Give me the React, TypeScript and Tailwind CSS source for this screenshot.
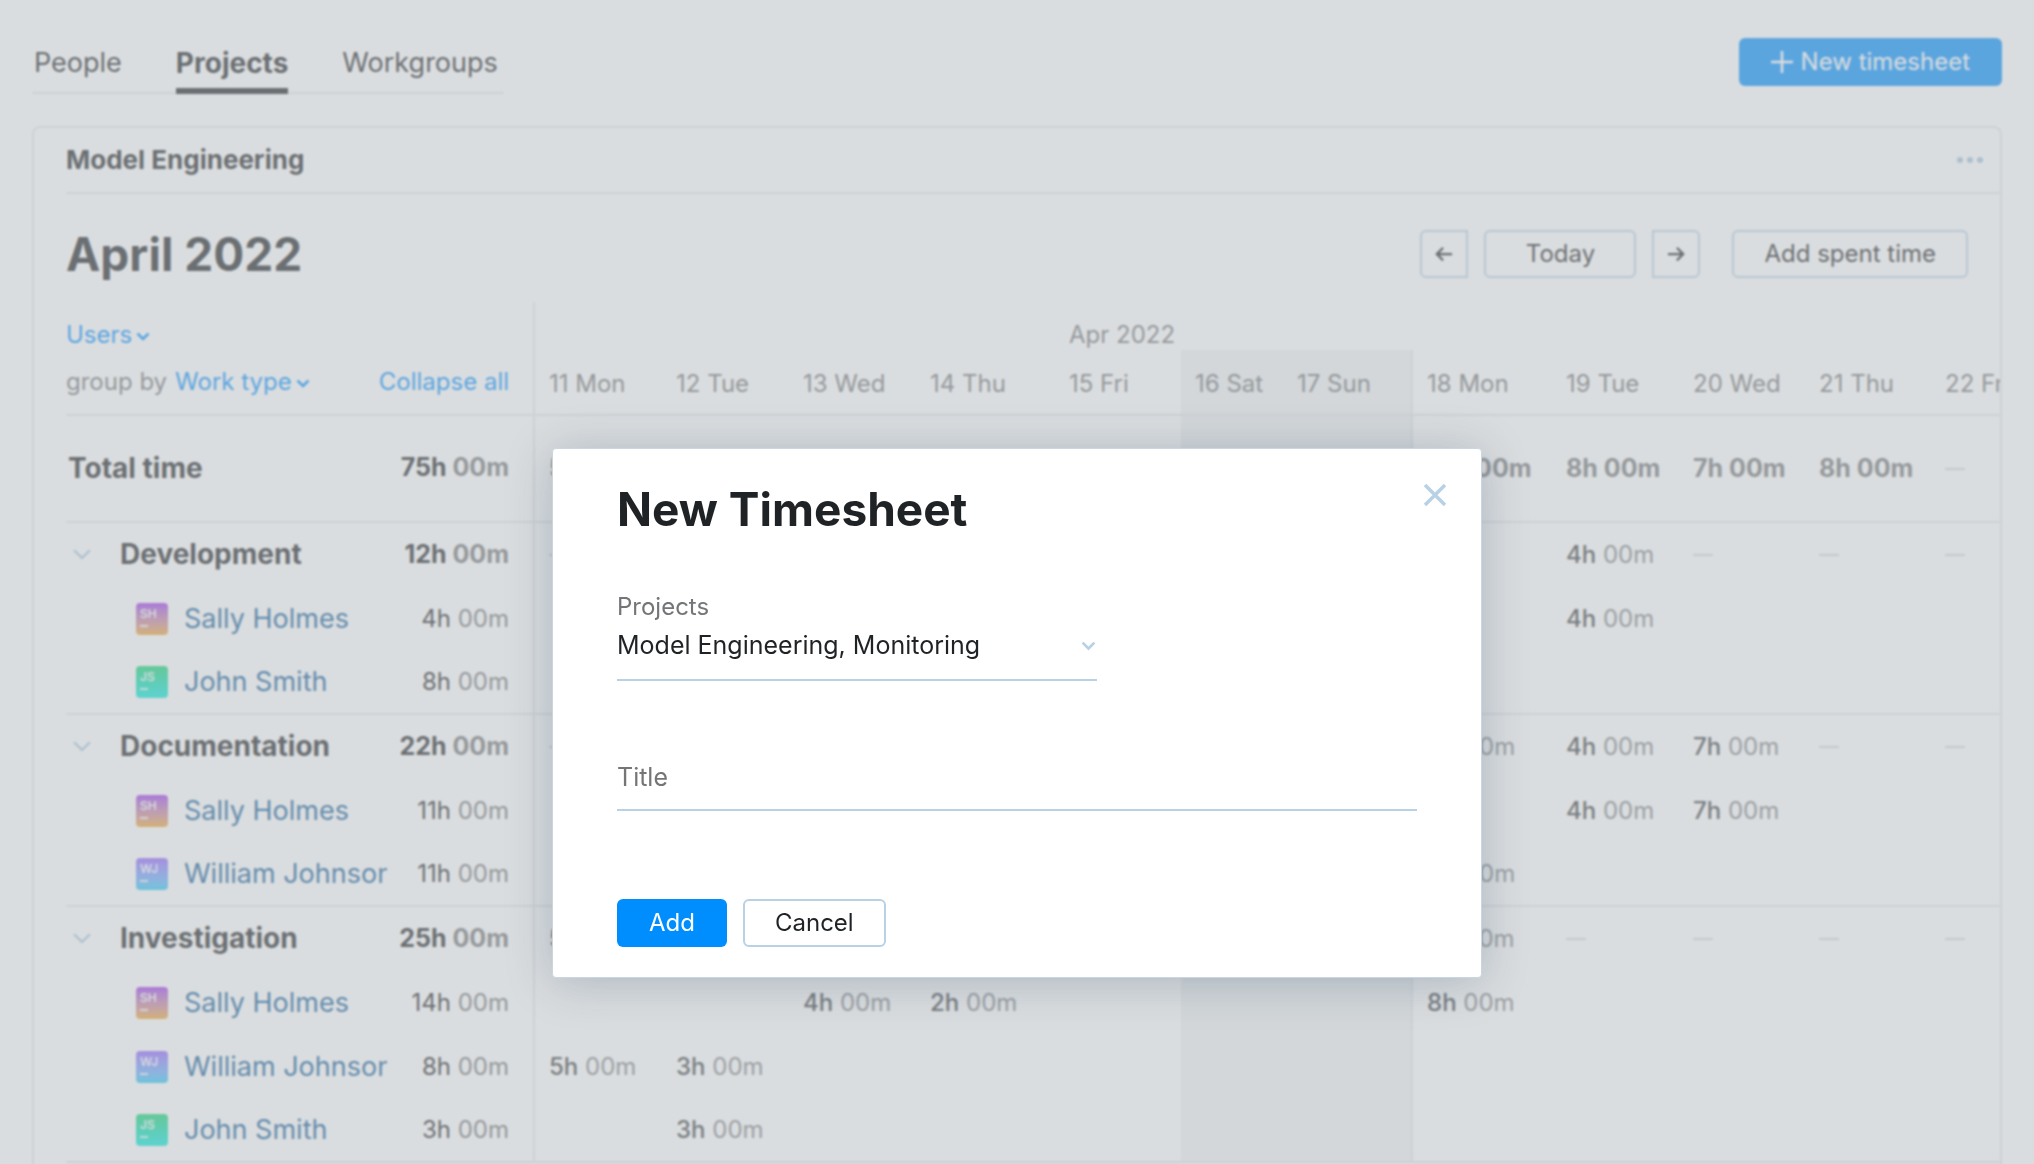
import { useState } from "react";
import type { ReactNode } from "react";

interface Day {
  label: string;
  month?: string;
  weekend?: boolean;
}

interface UserRow {
  name: string;
  initials: string;
  total: number;
  hours: Record<number, number>;
}

interface Group {
  name: string;
  total: number;
  hours: Record<number, number>;
  users: UserRow[];
}

const DAYS: Day[] = [
  { label: "11 Mon" },
  { label: "12 Tue" },
  { label: "13 Wed" },
  { label: "14 Thu" },
  { label: "15 Fri", month: "Apr 2022" },
  { label: "16 Sat", weekend: true },
  { label: "17 Sun", weekend: true },
  { label: "18 Mon" },
  { label: "19 Tue" },
  { label: "20 Wed" },
  { label: "21 Thu" },
  { label: "22 Fri" },
];

// Hours are keyed by the index of the day
const TOTALS: Record<number, number> = { 0: 5, 1: 6, 2: 12, 3: 9, 7: 12, 8: 8, 9: 7, 10: 8 };

const GROUPS: Group[] = [
  {
    name: "Development",
    total: 12,
    hours: { 2: 8, 8: 4 },
    users: [
      { name: "Sally Holmes", initials: "SH", total: 4, hours: { 8: 4 } },
      { name: "John Smith", initials: "JS", total: 8, hours: { 2: 8 } },
    ],
  },
  {
    name: "Documentation",
    total: 22,
    hours: { 3: 7, 7: 4, 8: 4, 9: 7 },
    users: [
      { name: "Sally Holmes", initials: "SH", total: 11, hours: { 8: 4, 9: 7 } },
      { name: "William Johnson", initials: "WJ", total: 11, hours: { 3: 7, 7: 4 } },
    ],
  },
  {
    name: "Investigation",
    total: 25,
    hours: { 0: 5, 1: 6, 2: 4, 3: 2, 7: 8 },
    users: [
      { name: "Sally Holmes", initials: "SH", total: 14, hours: { 2: 4, 3: 2, 7: 8 } },
      { name: "William Johnson", initials: "WJ", total: 8, hours: { 0: 5, 1: 3 } },
      { name: "John Smith", initials: "JS", total: 3, hours: { 1: 3 } },
    ],
  },
];

const AVATARS: Record<string, string> = {
  SH: "from-[#a030f0] to-[#f0a510]",
  JS: "from-[#18d370] to-[#08e8e0]",
  WJ: "from-[#9460ff] to-[#10caf8]",
};

function Chevron({ className }: { className: string }) {
  return (
    <svg viewBox="0 0 14 9" className={className} fill="none" stroke="currentColor" aria-hidden="true">
      <path d="M1.5 1.5 7 7l5.5-5.5" />
    </svg>
  );
}

function Avatar({ initials }: { initials: string }) {
  return (
    <span
      className={`flex size-8 shrink-0 flex-col rounded bg-linear-to-b px-1 pt-1 text-[12px] leading-[14px] font-medium text-white ${AVATARS[initials]}`}
    >
      {initials}
      <span className="mt-1 h-0.5 w-2 bg-white/80" />
    </span>
  );
}

function dayClass(index: number) {
  const day = DAYS[index];
  const edge = day.weekend && !DAYS[index + 1]?.weekend ? "border-r-2 border-r-[#e4e7ea]" : "";
  return `${day.weekend ? "bg-[#f0f2f3]" : ""} ${edge}`;
}

interface DayCellsProps {
  hours: Record<number, number>;
  kind: "total" | "group" | "user";
  border: string;
}

function DayCells({ hours, kind, border }: DayCellsProps) {
  return DAYS.map((day, i) => {
    const value = hours[i];
    return (
      <td key={day.label} className={`overflow-hidden pl-[14px] ${border} ${dayClass(i)}`}>
        {value ? (
          kind === "total" ? (
            <span className="text-[25px] font-bold text-[#737577]">{value}h 00m</span>
          ) : (
            <>
              <span className="font-medium text-[#3c4043]">{value}h</span>{" "}
              <span className="text-[#808386]">00m</span>
            </>
          )
        ) : (
          kind !== "user" && <span className="block h-0.5 w-5 bg-[#d0d5d9]" />
        )}
      </td>
    );
  });
}

function Total({ hours, bold }: { hours: number; bold?: boolean }) {
  return (
    <span className={bold ? "text-[25px] font-bold" : ""}>
      {hours}h <span className="text-[#737577]">00m</span>
    </span>
  );
}

function GroupRows({ group }: { group: Group }) {
  return (
    <>
      <tr className="h-16">
        <th scope="row" className="overflow-hidden pb-0.5 text-left">
          <button type="button" className="flex items-center">
            <Chevron className="ml-[6px] mr-7 w-5 stroke-[1.5] text-[#a3c4dd]" />
            <span className="text-[28px] leading-8 font-bold">{group.name}</span>
          </button>
        </th>
        <td className="border-r-2 border-r-[#e4e7ea] pr-6 pb-0.5 text-right">
          <Total hours={group.total} bold />
        </td>
        <DayCells hours={group.hours} kind="group" border="" />
      </tr>
      {group.users.map((user, i) => {
        const border = i === group.users.length - 1 ? "border-b-2 border-b-[#e4e7ea]" : "";
        return (
          <tr key={user.name} className="h-16">
            <th scope="row" className={`overflow-hidden pl-[70px] text-left font-normal ${border}`}>
              <a href="#" className="flex items-center gap-4 text-[27px] leading-8 text-[#0f5b99]">
                <Avatar initials={user.initials} />
                {user.name}
              </a>
            </th>
            <td className={`border-r-2 border-r-[#e4e7ea] pr-6 text-right ${border}`}>
              <Total hours={user.total} />
            </td>
            <DayCells hours={user.hours} kind="user" border={border} />
          </tr>
        );
      })}
    </>
  );
}

function TimesheetTable() {
  return (
    <table className="w-full table-fixed border-separate border-spacing-0 text-[24px] leading-8 whitespace-nowrap">
      <colgroup>
        <col className="w-[321px]" />
        <col className="w-[148px]" />
        <col className="w-[127px]" />
        <col className="w-[127px]" />
        <col className="w-[127px]" />
        <col className="w-[139px]" />
        <col className="w-[126px]" />
        <col className="w-[102px]" />
        <col className="w-[130px]" />
        <col className="w-[139px]" />
        <col className="w-[127px]" />
        <col className="w-[126px]" />
        <col className="w-[126px]" />
        <col />
      </colgroup>
      <thead className="text-left text-[#737577]">
        <tr className="h-12 leading-7">
          <td colSpan={2} className="border-r-2 border-r-[#e4e7ea] pt-[18px]">
            <button type="button" className="flex items-center gap-1 text-[#008eff]">
              Users
              <Chevron className="mt-0.5 w-[14px] stroke-[2.5]" />
            </button>
          </td>
          {DAYS.map((day) => (
            <td key={day.label} className="pt-[18px] pl-[14px]">
              {day.month}
            </td>
          ))}
        </tr>
        <tr className="h-[66px]">
          <td colSpan={2} className="border-r-2 border-b-2 border-[#e4e7ea] pr-6">
            <div className="flex items-center gap-2">
              group by
              <button type="button" className="flex items-center gap-1 text-[#008eff]">
                Work type
                <Chevron className="mt-0.5 w-[14px] stroke-[2.5]" />
              </button>
              <button type="button" className="ml-auto text-[#008eff]">
                Collapse all
              </button>
            </div>
          </td>
          {DAYS.map((day, i) => (
            <th
              key={day.label}
              scope="col"
              className={`overflow-hidden border-b-2 border-b-[#e4e7ea] pt-1 pl-[14px] font-normal ${dayClass(i)}`}
            >
              {day.label}
            </th>
          ))}
        </tr>
      </thead>
      <tbody className="text-[#1f2326]">
        <tr className="h-[107px]">
          <th scope="row" className="border-b-2 border-b-[#e4e7ea] pb-0.5 pl-0.5 text-left text-[28px] font-bold">
            Total time
          </th>
          <td className="border-r-2 border-b-2 border-[#e4e7ea] pr-6 pb-0.5 text-right">
            <Total hours={75} bold />
          </td>
          <DayCells hours={TOTALS} kind="total" border="border-b-2 border-b-[#e4e7ea]" />
        </tr>
        {GROUPS.map((group) => (
          <GroupRows key={group.name} group={group} />
        ))}
      </tbody>
    </table>
  );
}

function ToolButton({ label, className, children }: { label?: string; className: string; children: ReactNode }) {
  return (
    <button
      type="button"
      aria-label={label}
      className={`flex h-12 items-center justify-center border-2 border-[#b8d1e5] text-[24px] leading-8 ${className}`}
    >
      {children}
    </button>
  );
}

function Arrow({ className = "" }: { className?: string }) {
  return (
    <svg viewBox="0 0 20 18" className={`w-[18px] ${className}`} fill="none" stroke="currentColor" strokeWidth="2.5">
      <path d="M19 9H2M9 2 2 9l7 7" />
    </svg>
  );
}

function Dialog({ onClose }: { onClose: () => void }) {
  const [title, setTitle] = useState("");

  return (
    <div className="fixed inset-0 flex items-start justify-center bg-[#b6bbc0]/50 pt-[448px] backdrop-blur-[1px]">
      <form
        role="dialog"
        aria-labelledby="dialog-title"
        className="w-[930px] rounded border border-[#ccd6e0] bg-white px-16 py-[30px] text-[24px] leading-8 text-[#1f2326] shadow-[0_4px_48px_rgba(0,42,76,0.22)]"
      >
        <div className="flex items-start justify-between">
          <h2 id="dialog-title" className="text-[46px] leading-[60px] font-bold">
            New Timesheet
          </h2>
          <button type="button" aria-label="Close" className="-mr-[30px] mt-1 text-[#b8d1e5]" onClick={onClose}>
            <svg viewBox="0 0 24 24" className="size-6" fill="none" stroke="currentColor" strokeWidth="3.5">
              <path d="m2 2 20 20M22 2 2 22" />
            </svg>
          </button>
        </div>

        <div className="mt-[52px] w-[480px] border-b-2 border-[#b8d1e5]">
          <label htmlFor="projects" className="block text-[#737577]">
            Projects
          </label>
          <div className="relative flex items-center">
            <select id="projects" className="h-14 w-full appearance-none bg-transparent pb-3 text-[25px] outline-none">
              <option>Model Engineering, Monitoring</option>
            </select>
            <Chevron className="pointer-events-none absolute right-px bottom-7 w-[15px] stroke-[2.5] text-[#b8d1e5]" />
          </div>
        </div>

        <input
          type="text"
          aria-label="Title"
          placeholder="Title"
          value={title}
          onChange={(e) => setTitle(e.target.value)}
          className="mt-[68px] block h-[62px] w-full border-b-2 border-[#b8d1e5] pb-1 text-[25px] outline-none placeholder:text-[#737577]"
        />

        <div className="mt-[88px] flex gap-4">
          <button type="submit" className="h-12 rounded-md bg-[#008eff] px-8 text-white">
            Add
          </button>
          <button type="button" className="h-12 rounded-md border-2 border-[#b8d1e5] px-[30px]" onClick={onClose}>
            Cancel
          </button>
        </div>
      </form>
    </div>
  );
}

export default function App() {
  const [open, setOpen] = useState(true);

  return (
    <div className="flex h-screen flex-col overflow-hidden bg-white px-8 font-['Inter',sans-serif] text-[#1f2326]">
      <header className="flex items-start justify-between pt-[38px]">
        <nav className="flex h-14 gap-[54px] border-b-2 border-[#e4e7ea] pr-[6px] pl-[2px] text-[27px] leading-[50px]">
          <a href="#">People</a>
          <a href="#" className="h-14 border-b-[6px] border-[#1f2326] text-[28px] leading-[50px] font-bold">
            Projects
          </a>
          <a href="#">Workgroups</a>
        </nav>
        <button
          type="button"
          className="flex h-12 items-center gap-2 rounded-md bg-[#008eff] px-8 text-[24px] leading-8 text-white"
          onClick={() => setOpen(true)}
        >
          <svg viewBox="0 0 22 22" className="w-[22px]" fill="none" stroke="currentColor" strokeWidth="2.5">
            <path d="M11 0v22M0 11h22" />
          </svg>
          New timesheet
        </button>
      </header>

      <main className="mt-8 min-h-0 flex-1 overflow-hidden rounded-t-lg border-2 border-b-0 border-[#e4e7ea] pl-8">
        <div className="flex h-[66px] items-center justify-between border-b-2 border-[#e4e7ea] pr-4">
          <h2 className="text-[26px] leading-8 font-bold">Model Engineering</h2>
          <button type="button" aria-label="More" className="text-[#9fc2de]">
            <svg viewBox="0 0 28 8" className="w-7" fill="currentColor">
              <circle cx="4" cy="4" r="3" />
              <circle cx="14" cy="4" r="3" />
              <circle cx="24" cy="4" r="3" />
            </svg>
          </button>
        </div>

        <div className="flex h-[108px] items-center justify-between pt-3 pr-8">
          <h1 className="text-[46px] leading-[60px] font-bold">April 2022</h1>
          <div className="flex gap-4">
            <ToolButton label="Previous" className="w-12 rounded-l-md">
              <Arrow />
            </ToolButton>
            <ToolButton className="w-[152px] rounded-md">Today</ToolButton>
            <ToolButton label="Next" className="w-12 rounded-r-md">
              <Arrow className="rotate-180" />
            </ToolButton>
            <ToolButton className="ml-4 rounded-md px-[30px]">Add spent time</ToolButton>
          </div>
        </div>

        <TimesheetTable />
      </main>

      {open && <Dialog onClose={() => setOpen(false)} />}
    </div>
  );
}
